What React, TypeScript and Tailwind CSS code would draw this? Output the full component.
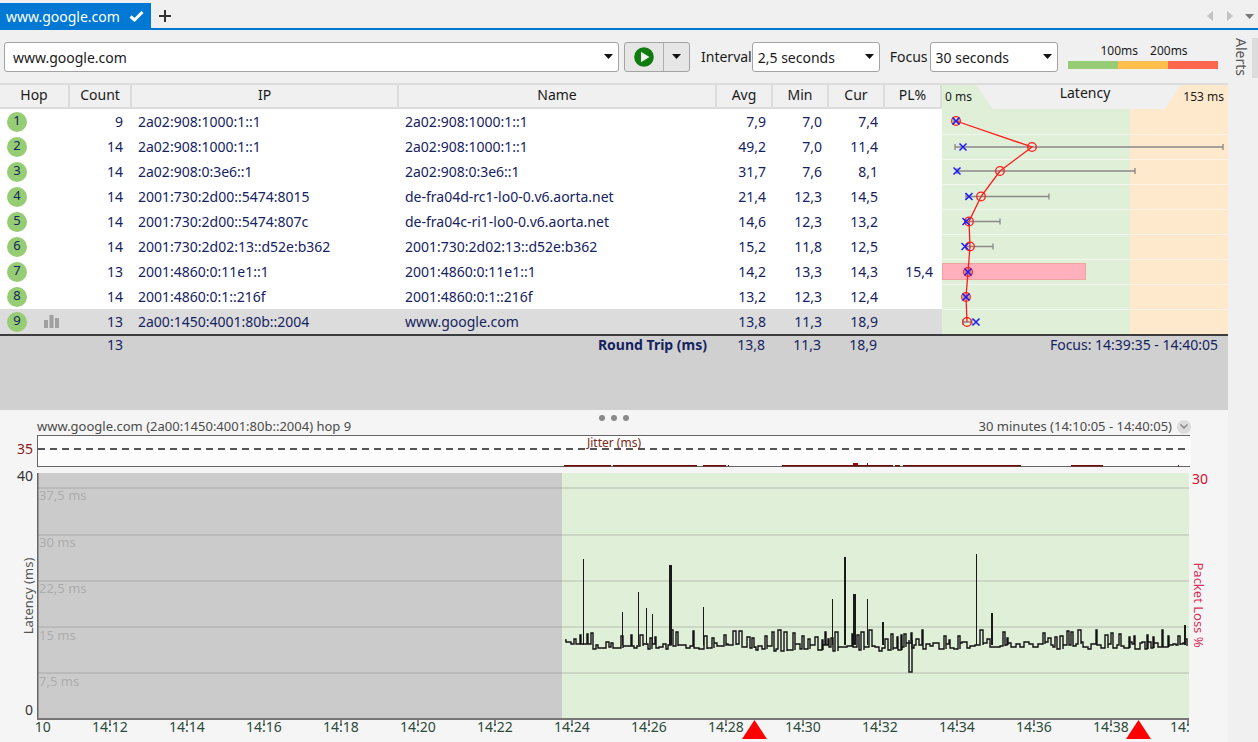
import React from 'react';

const FONT = "font-['Noto_Sans',sans-serif]";
const NAVY = 'text-[#14235f]';

const HOPS = [
  { n: 1, count: 9, ip: '2a02:908:1000:1::1', name: '2a02:908:1000:1::1', avg: '7,9', min: '7,0', cur: '7,4', pl: '' },
  { n: 2, count: 14, ip: '2a02:908:1000:1::1', name: '2a02:908:1000:1::1', avg: '49,2', min: '7,0', cur: '11,4', pl: '' },
  { n: 3, count: 14, ip: '2a02:908:0:3e6::1', name: '2a02:908:0:3e6::1', avg: '31,7', min: '7,6', cur: '8,1', pl: '' },
  { n: 4, count: 14, ip: '2001:730:2d00::5474:8015', name: 'de-fra04d-rc1-lo0-0.v6.aorta.net', avg: '21,4', min: '12,3', cur: '14,5', pl: '' },
  { n: 5, count: 14, ip: '2001:730:2d00::5474:807c', name: 'de-fra04c-ri1-lo0-0.v6.aorta.net', avg: '14,6', min: '12,3', cur: '13,2', pl: '' },
  { n: 6, count: 14, ip: '2001:730:2d02:13::d52e:b362', name: '2001:730:2d02:13::d52e:b362', avg: '15,2', min: '11,8', cur: '12,5', pl: '' },
  { n: 7, count: 13, ip: '2001:4860:0:11e1::1', name: '2001:4860:0:11e1::1', avg: '14,2', min: '13,3', cur: '14,3', pl: '15,4' },
  { n: 8, count: 14, ip: '2001:4860:0:1::216f', name: '2001:4860:0:1::216f', avg: '13,2', min: '12,3', cur: '12,4', pl: '' },
  { n: 9, count: 13, ip: '2a00:1450:4001:80b::2004', name: 'www.google.com', avg: '13,8', min: '11,3', cur: '18,9', pl: '' },
];

// x of avg (circle), min (cross), range for each hop, in page pixels
const TRACE = [
  { y: 121, avg: 956, min: 956, lo: 954, hi: 958 },
  { y: 147, avg: 1032, min: 963, lo: 955, hi: 1223 },
  { y: 171, avg: 1000, min: 957, lo: 957, hi: 1135 },
  { y: 196.5, avg: 981, min: 969, lo: 966, hi: 1049 },
  { y: 221.5, avg: 969, min: 966, lo: 966, hi: 1000 },
  { y: 246.5, avg: 970, min: 965, lo: 966, hi: 993 },
  { y: 272, avg: 968, min: 968, lo: 966, hi: 970 },
  { y: 297, avg: 966, min: 966, lo: 964, hi: 968 },
  { y: 322, avg: 967, min: 976, lo: 963, hi: 972 },
];

const SPIKES: Record<number, [number, number]> = {
  583: [559, 1], 622: [612, 1], 638: [592, 1], 646: [608, 1], 652: [614, 1], 670: [565, 3],
  703: [607, 1], 832: [599, 1], 845: [557, 2], 854: [594, 3], 867: [599, 1], 883: [622, 2],
  976: [554, 1], 992: [613, 2], 1185: [625, 2],
};

// step line: jagged baseline with narrow peaks
function buildLatencyPath() {
  let seed = 1337;
  const rnd = () => {
    seed = (seed * 16807) % 2147483647;
    return seed / 2147483647;
  };
  let d = 'M565 640';
  let x = 566;
  while (x < 1189) {
    const low = x > 740 && x < 900 ? 644 : 642;
    const base = low + Math.round(rnd() * 7);
    d += `H${x}V${base}`;
    x += 2 + Math.floor(rnd() * 4);
    if (rnd() > 0.5) {
      const top = 630 + Math.round(rnd() * 10);
      const width = 1 + Math.floor(rnd() * 3);
      d += `H${x}V${top}H${x + width}V${base}`;
      x += width;
    }
  }
  return d;
}

const LATENCY_PATH = buildLatencyPath();

const Chevron = () => (
  <svg width="9" height="5" viewBox="0 0 9 5"><path d="M0 0h9L4.5 5z" fill="#111" /></svg>
);

const Select = ({ label, className }: { label: string; className: string }) => (
  <div className={`flex h-[30px] items-center justify-between rounded-[3px] border border-[#a3a3a3] bg-white pl-[5px] pr-[5px] text-[14px] text-[#1a1a1a] ${className}`}>
    <span className="pt-[1px]">{label}</span>
    <Chevron />
  </div>
);

const TabBar = () => (
  <div className="flex h-[30px] items-end border-b-2 border-[#0078d4] bg-[#f0f0f0]">
    <div className="flex h-[25px] w-[151px] items-center gap-[9px] bg-[#0078d4] pl-[6px] text-[14px] text-white">
      <span className="pt-[2px]">www.google.com</span>
      <svg width="15" height="12" viewBox="0 0 15 12"><path d="M1.5 6.5 5.5 10 13.5 2" fill="none" stroke="white" strokeWidth="3" /></svg>
    </div>
    <svg className="mb-[5px] ml-[7px]" width="14" height="14" viewBox="0 0 14 14"><path d="M7 1v12M1 7h12" stroke="#333" strokeWidth="2" /></svg>
    <div className="ml-auto mb-[7px] mr-[4px] flex items-center gap-[14px]">
      <svg width="6" height="10" viewBox="0 0 6 10"><path d="M6 0v10L0 5z" fill="#c4c4c4" /></svg>
      <svg width="6" height="10" viewBox="0 0 6 10"><path d="M0 0v10l6-5z" fill="#c4c4c4" /></svg>
      <svg className="ml-[-2px]" width="9" height="5" viewBox="0 0 9 5"><path d="M0 0h9L4.5 5z" fill="#777" /></svg>
    </div>
  </div>
);

const Toolbar = () => (
  <div className="flex h-[53px] items-center pb-[1px] pl-[4px] pt-[1px]">
    <Select label="www.google.com" className="w-[615px] pl-[8px]" />
    <div className="ml-[5px] flex h-[30px] w-[66px] overflow-hidden rounded-[3px] border border-[#a3a3a3] bg-[#e6e6e6]">
      <div className="flex w-[39px] items-center justify-center border-r border-[#b0b0b0]">
        <svg width="20" height="20" viewBox="0 0 20 20">
          <circle cx="10" cy="10" r="9.8" fill="#107c10" />
          <path d="M7 4.8 15.4 10 7 15.2z" fill="#f2f2f2" />
        </svg>
      </div>
      <div className="flex flex-1 items-center justify-center"><Chevron /></div>
    </div>
    <span className="ml-[11px] pb-[1px] text-[14px] text-[#1a1a1a]">Interval</span>
    <Select label="2,5 seconds" className="w-[128px]" />
    <span className="ml-[10px] pb-[1px] text-[14px] text-[#1a1a1a]">Focus</span>
    <Select label="30 seconds" className="ml-[2px] w-[128px]" />
    <div className="ml-[10px] w-[150px]">
      <div className="flex h-[15px] items-start justify-center gap-[12px] pl-[3px] text-[12px] leading-none text-[#1a1a1a]">
        <span>100ms</span>
        <span>200ms</span>
      </div>
      <div className="mt-[1px] flex h-[8px]">
        <div className="flex-1 bg-[#96cc73]" />
        <div className="flex-1 bg-[#ffbf4d]" />
        <div className="flex-1 bg-[#ff6650]" />
      </div>
    </div>
  </div>
);

const HeaderCell = ({ label, className }: { label: string; className: string }) => (
  <div className={`flex items-center justify-center border-r-2 border-[#dcdcdc] pb-[3px] ${className}`}>{label}</div>
);

const Table = () => (
  <div className="w-[942px]">
    <div className="flex h-[26px] border-y-2 border-[#dcdcdc] bg-[#f0f0f0] text-[14px] text-[#1a1a1a]">
      <HeaderCell label="Hop" className="w-[70px]" />
      <HeaderCell label="Count" className="w-[62px]" />
      <HeaderCell label="IP" className="w-[267px]" />
      <HeaderCell label="Name" className="w-[318px]" />
      <HeaderCell label="Avg" className="w-[56px]" />
      <HeaderCell label="Min" className="w-[56px]" />
      <HeaderCell label="Cur" className="w-[56px]" />
      <HeaderCell label="PL%" className="w-[57px]" />
    </div>
    {HOPS.map(hop => (
      <div key={hop.n} className={`flex h-[25px] items-center text-[14px] ${NAVY} ${hop.n === 9 ? 'bg-[#dcdcdc]' : 'bg-white'}`}>
        <div className="flex w-[70px] items-center pl-[7px]">
          <div className="flex h-[20px] w-[20px] items-center justify-center rounded-full bg-[#96cc73] pb-[2px] text-[13px]">{hop.n}</div>
          {hop.n === 9 && (
            <svg className="ml-[17px]" width="15" height="13" viewBox="0 0 15 13" fill="#a0a0a0">
              <rect x="0" y="5" width="4" height="8" />
              <rect x="5.5" y="0" width="4" height="13" />
              <rect x="11" y="3" width="4" height="10" />
            </svg>
          )}
        </div>
        <div className="w-[53px] pb-[1px] text-right">{hop.count}</div>
        <div className="w-[276px] pb-[1px] pl-[15px]">{hop.ip}</div>
        <div className="w-[318px] pb-[1px] pl-[6px]">{hop.name}</div>
        <div className="w-[49px] pb-[1px] text-right">{hop.avg}</div>
        <div className="w-[56px] pb-[1px] text-right">{hop.min}</div>
        <div className="w-[56px] pb-[1px] text-right">{hop.cur}</div>
        <div className="w-[55px] pb-[1px] text-right">{hop.pl}</div>
      </div>
    ))}
  </div>
);

const LatencyColumn = () => (
  <svg className="block w-[286px] bg-[#f0f0f0]" width="286" height="251" viewBox="942 83 286 251">
    <rect x="942" y="83" width="286" height="2" fill="#dcdcdc" />
    <path d="M942 85H976L993 109H942z" fill="#e0efd8" />
    <path d="M1228 85H1181L1165 109H1228z" fill="#ffe9cc" />
    <rect x="942" y="109" width="188" height="225" fill="#e0efd8" />
    <rect x="1130" y="109" width="98" height="225" fill="#ffe9cc" />
    {[134, 159, 184, 209, 234, 259, 284, 309].map(y => (
      <rect key={y} x="942" y={y} width="286" height="1" fill="#ffffff" opacity="0.5" />
    ))}
    <text x="945" y="101" fill="#1a1a1a" className="text-[12px]">0 ms</text>
    <text x="1085" y="98" fill="#1a1a1a" textAnchor="middle" className="text-[14px]">Latency</text>
    <text x="1224" y="101" fill="#1a1a1a" textAnchor="end" className="text-[12px]">153 ms</text>
    <rect x="942.5" y="263.5" width="143" height="16" fill="#ffb0bb" stroke="#eea49c" />
    {TRACE.map((t, i) => (
      <path key={i} d={`M${t.lo} ${t.y}H${t.hi}M${t.lo} ${t.y - 3}v6M${t.hi} ${t.y - 3}v6`} stroke="#888" strokeWidth="1.3" fill="none" />
    ))}
    <polyline points={TRACE.map(t => `${t.avg},${t.y}`).join(' ')} fill="none" stroke="#ff1a1a" strokeWidth="1.3" />
    {TRACE.map((t, i) => (
      <circle key={i} cx={t.avg} cy={t.y} r="4.3" fill="none" stroke="#ff1a1a" strokeWidth="1.3" />
    ))}
    {TRACE.map((t, i) => (
      <path key={i} d={`M${t.min - 3.5} ${t.y - 3.5}l7 7M${t.min + 3.5} ${t.y - 3.5}l-7 7`} stroke="#1a1aff" strokeWidth="1.5" fill="none" />
    ))}
  </svg>
);

const SummaryRow = () => (
  <div className={`h-[76px] border-t-2 border-[#3c3c3c] bg-[#d0d0d0] text-[14px] ${NAVY}`}>
    <div className="flex h-[17px] items-center">
      <div className="w-[123px] text-right">13</div>
      <div className="w-[584px] text-right font-bold">Round Trip (ms)</div>
      <div className="w-[58px] text-right">13,8</div>
      <div className="w-[56px] text-right">11,3</div>
      <div className="w-[56px] text-right">18,9</div>
      <div className="w-[341px] text-right">Focus: 14:39:35 - 14:40:05</div>
    </div>
  </div>
);

const TIME_TICKS = [33, 110, 187, 264, 341, 418, 495, 572, 649, 726, 803, 880, 957, 1034, 1111, 1188];

const JITTER_SEGMENTS = [
  [564, 611], [613, 697], [703, 726], [728, 729], [782, 893], [895, 900], [903, 1021], [1071, 1103], [1178, 1179],
];

const ChartPanel = () => (
  <svg className="block" width="1228" height="307" viewBox="0 435 1228 307">
    {/* jitter strip */}
    <rect x="37.5" y="435.5" width="1152" height="31" fill="#fcfcfc" stroke="#666" />
    <rect x="1189" y="436" width="2" height="30" fill="#fcfcfc" />
    <line x1="38" x2="1189" y1="449" y2="449" stroke="#555" strokeWidth="2" strokeDasharray="7 5" />
    <text x="33" y="454" fill="#8a1c1c" textAnchor="end" className="text-[14px]">35</text>
    <text x="614" y="447" fill="#7a2a1a" textAnchor="middle" className="text-[12px]">Jitter (ms)</text>
    {JITTER_SEGMENTS.map(([a, b]) => (
      <rect key={a} x={a} y="465" width={b - a} height="1.5" fill="#6e0a0a" />
    ))}
    <rect x="853" y="463" width="5" height="2" fill="#8a0a0a" />
    <rect x="867" y="463" width="1" height="2" fill="#8a0a0a" />

    {/* latency plot */}
    <rect x="38" y="473" width="524" height="245" fill="#cbcbcb" />
    <rect x="562" y="473" width="627" height="245" fill="#e0efd8" />
    {[488, 535, 581, 627, 673].map(y => (
      <rect key={y} x="38" y={y - 1} width="1151" height="2" fill="#808080" opacity="0.22" />
    ))}
    {[
      ['37,5 ms', 500],
      ['30 ms', 547],
      ['22,5 ms', 593],
      ['15 ms', 640],
      ['7,5 ms', 686],
    ].map(([label, y]) => (
      <text key={label} x="39" y={y} fill="#adadad" className="text-[13px]">{label}</text>
    ))}
    <path d={LATENCY_PATH} fill="none" stroke="#111" strokeWidth="1.4" />
    {Object.entries(SPIKES).map(([x, [top, w]]) => (
      <rect key={x} x={Number(x) - Math.floor(w / 2)} y={top} width={w} height={645 - top} fill="#1a1a1a" />
    ))}
    <path d="M909 640V672H912V640" fill="none" stroke="#1a1a1a" strokeWidth="1.5" />
    <rect x="37" y="473" width="1.5" height="246" fill="#666" />
    <rect x="37" y="718" width="1152" height="2" fill="#777" />

    {/* axes */}
    <text x="33" y="481" fill="#333" textAnchor="end" className="text-[14px]">40</text>
    <text x="33" y="715" fill="#333" textAnchor="end" className="text-[14px]">0</text>
    <text x="0" y="0" fill="#555" textAnchor="middle" transform="translate(33 596) rotate(-90)" className="text-[13px]">Latency (ms)</text>
    <text x="1192" y="484" fill="#d8102c" className="text-[14px]">30</text>
    <text x="0" y="0" fill="#d8305c" textAnchor="middle" transform="translate(1194 605) rotate(90)" className="text-[13px]">Packet Loss %</text>
    <clipPath id="axis-clip"><rect x="36" y="718" width="1153" height="24" /></clipPath>
    <g clipPath="url(#axis-clip)">
      {TIME_TICKS.map((x, i) => (
        <text key={x} x={x} y="732" fill="#2b4a3a" textAnchor="middle" className="text-[14px]">
          {`14:${String(10 + i * 2).padStart(2, '0')}`}
        </text>
      ))}
      {TIME_TICKS.map(x => (
        <line key={x} x1={x} x2={x} y1="720" y2="725" stroke="#222" />
      ))}
    </g>
    <path d="M754.5 720 767 739H742z" fill="#ff0000" />
    <path d="M1138.5 720 1151 739H1126z" fill="#ff0000" />
  </svg>
);

const App: React.FC = () => {
  return (
    <div className={`h-[742px] w-[1258px] overflow-hidden bg-[#f0f0f0] ${FONT}`}>
      <TabBar />
      <div className="flex">
        <div className="w-[1228px] shrink-0">
          <Toolbar />
          <div className="flex">
            <Table />
            <LatencyColumn />
          </div>
          <SummaryRow />
          <div className="h-[332px] bg-[#f5f5f5] text-[13px] text-[#4a4a4a]">
            <div className="flex h-[8px] items-center justify-center gap-[6px] pt-[8px]">
              <span className="h-[6px] w-[6px] rounded-full bg-[#8a8a8a]" />
              <span className="h-[6px] w-[6px] rounded-full bg-[#8a8a8a]" />
              <span className="h-[6px] w-[6px] rounded-full bg-[#8a8a8a]" />
            </div>
            <div className="flex h-[17px] items-center justify-between pl-[37px] pr-[37px]">
              <span>www.google.com (2a00:1450:4001:80b::2004) hop 9</span>
              <div className="flex items-center gap-[5px]">
                <span>30 minutes (14:10:05 - 14:40:05)</span>
                <span className="flex h-[14px] w-[14px] items-center justify-center rounded-full bg-[#dcdcdc]">
                  <svg width="8" height="5" viewBox="0 0 8 5"><path d="M.5.5 4 4 7.5.5" fill="none" stroke="#888" strokeWidth="1.5" /></svg>
                </span>
              </div>
            </div>
            <ChartPanel />
          </div>
        </div>
        {/* Alerts rail */}
        <div className="flex flex-1 items-start justify-between">
          <div className="mt-[8px] ml-[3px] text-[14px] text-[#555] [writing-mode:vertical-rl]">Alerts</div>
          <div className="mt-[8px] h-[40px] w-[6px] bg-[#dcdcdc]" />
        </div>
      </div>
    </div>
  );
};

export default App;
